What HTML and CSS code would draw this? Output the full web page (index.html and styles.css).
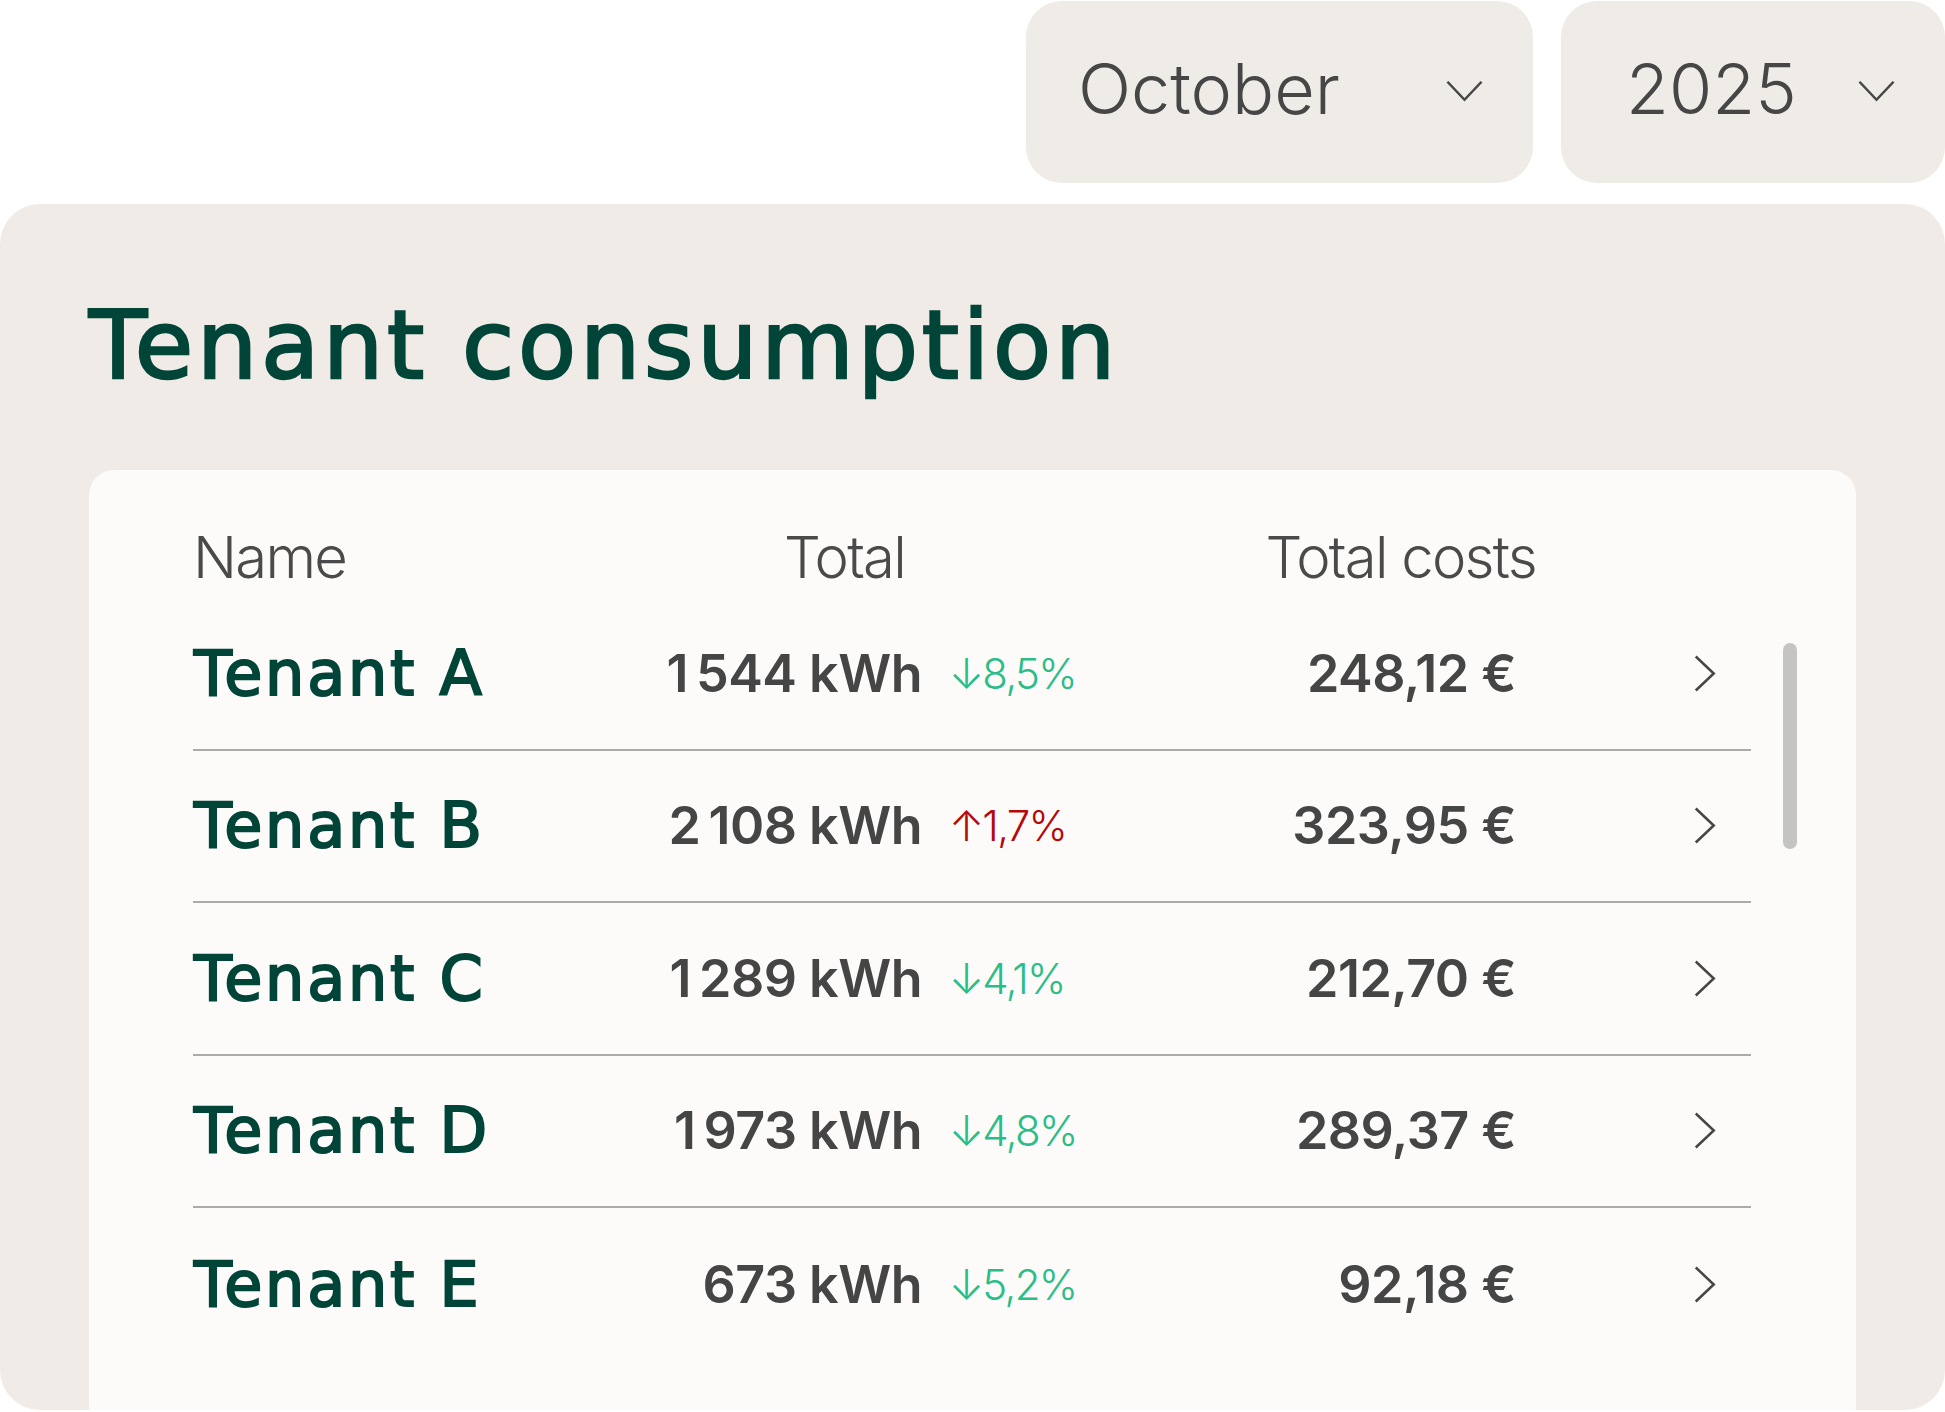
FILE: index.html
```html
<!DOCTYPE html>
<html>
<head>
    <meta charset="utf-8">
    <title>Tenant consumption</title>
    <link rel="stylesheet" href="styles.css">
</head>
<body>
    <div class="filters">
        <div class="select select-month">
            <span>October</span>
            <svg class="select-chevron" viewBox="0 0 38 22"><polyline points="1.5,1.5 19,20 36.5,1.5"/></svg>
        </div>
        <div class="select select-year">
            <span>2025</span>
            <svg class="select-chevron" viewBox="0 0 38 22"><polyline points="1.5,1.5 19,20 36.5,1.5"/></svg>
        </div>
    </div>

    <section class="card">
        <h1 class="card-title">Tenant consumption</h1>

        <div class="table">
            <div class="scrollbar"></div>

            <div class="table-head">
                <div class="head-name">Name</div>
                <div class="head-total">Total</div>
                <div></div>
                <div class="head-costs">Total costs</div>
            </div>

            <div class="table-body">
                <div class="row">
                    <div class="name">Tenant A</div>
                    <div class="total">1&#8239;544 kWh</div>
                    <div class="change down">↓8,5%</div>
                    <div class="cost">248,12 €</div>
                    <div></div>
                    <svg class="row-chevron" viewBox="0 0 22 38"><polyline points="1.5,1.5 20,19 1.5,36.5"/></svg>
                </div>
                <div class="row">
                    <div class="name">Tenant B</div>
                    <div class="total">2&#8239;108 kWh</div>
                    <div class="change up">↑1,7%</div>
                    <div class="cost">323,95 €</div>
                    <div></div>
                    <svg class="row-chevron" viewBox="0 0 22 38"><polyline points="1.5,1.5 20,19 1.5,36.5"/></svg>
                </div>
                <div class="row">
                    <div class="name">Tenant C</div>
                    <div class="total">1&#8239;289 kWh</div>
                    <div class="change down">↓4,1%</div>
                    <div class="cost">212,70 €</div>
                    <div></div>
                    <svg class="row-chevron" viewBox="0 0 22 38"><polyline points="1.5,1.5 20,19 1.5,36.5"/></svg>
                </div>
                <div class="row">
                    <div class="name">Tenant D</div>
                    <div class="total">1&#8239;973 kWh</div>
                    <div class="change down">↓4,8%</div>
                    <div class="cost">289,37 €</div>
                    <div></div>
                    <svg class="row-chevron" viewBox="0 0 22 38"><polyline points="1.5,1.5 20,19 1.5,36.5"/></svg>
                </div>
                <div class="row">
                    <div class="name">Tenant E</div>
                    <div class="total">673 kWh</div>
                    <div class="change down">↓5,2%</div>
                    <div class="cost">92,18 €</div>
                    <div></div>
                    <svg class="row-chevron" viewBox="0 0 22 38"><polyline points="1.5,1.5 20,19 1.5,36.5"/></svg>
                </div>
            </div>
        </div>
    </section>
</body>
</html>
```

FILE: styles.css
```css
body {
    margin: 0;
    width: 1945px;
    height: 1412px;
    overflow: hidden;
    background: #ffffff;
    font-family: Inter, "Liberation Sans", sans-serif;
    color: #444444;
}

/* month / year pickers */
.filters {
    display: flex;
    justify-content: flex-end;
    gap: 28px;
    height: 182px;
    padding-top: 1px;
    margin-bottom: 21px;
}

.select {
    display: flex;
    align-items: center;
    justify-content: space-between;
    box-sizing: border-box;
    height: 182px;
    padding-right: 50px;
    padding-bottom: 8px;
    background: #efebe7;
    border-radius: 36px;
    font-size: 70px;
    font-weight: 300;
    color: #464646;
}

.select-month {
    width: 507px;
    padding-left: 52px;
}

.select-year {
    width: 384px;
    padding-left: 65px;
}

.select-chevron {
    width: 37px;
    height: 22px;
    margin-top: 6px;
    fill: none;
    stroke: #464646;
    stroke-width: 2.6;
}

/* main card */
.card {
    box-sizing: border-box;
    height: 1206px;
    padding: 94px 89px 0 89px;
    background: #f0ebe7;
    border-radius: 40px;
    overflow: hidden;
}

.card-title {
    margin: 0 0 77px 0;
    font-family: "DejaVu Sans", Inter, sans-serif;
    font-size: 95px;
    line-height: 1;
    font-weight: 400;
    letter-spacing: 0.04em;
    -webkit-text-stroke: 2.4px #004538;
    color: #004538;
}

.table {
    position: relative;
    box-sizing: border-box;
    height: 960px;
    padding: 58px 105px 0 104px;
    background: #fcfbf9;
    border-radius: 25px;
}

.table-head,
.row {
    display: grid;
    grid-template-columns: 330px 399px 219px 375px 1fr 22px;
    align-items: center;
    padding-right: 35px;
}

.table-head {
    height: 58px;
    margin-bottom: 12px;
    font-size: 58px;
    line-height: 1;
    font-weight: 300;
    letter-spacing: -0.03em;
    color: #4a4a4a;
}

.head-total {
    text-align: right;
    padding-right: 17px;
}

.head-costs {
    justify-self: end;
    margin-right: -20px;
}

.row {
    box-sizing: border-box;
    height: 152.5px;
    border-bottom: 2px solid #ababab;
}

.row:last-child {
    border-bottom: none;
}

.name {
    padding-left: 1px;
    font-family: "DejaVu Sans", Inter, sans-serif;
    font-size: 62px;
    font-weight: 400;
    letter-spacing: 0.045em;
    -webkit-text-stroke: 2px #004538;
    color: #004538;
}

.total,
.cost {
    text-align: right;
    font-size: 52px;
    font-weight: 600;
    letter-spacing: -0.01em;
    color: #454545;
}

.change {
    padding-left: 27px;
    font-size: 42px;
    font-weight: 300;
    letter-spacing: -0.04em;
}

.change.down {
    color: #2bbd87;
}

.change.up {
    color: #b5090b;
}

.row-chevron {
    width: 22px;
    height: 37px;
    fill: none;
    stroke: #464646;
    stroke-width: 2.6;
}

.scrollbar {
    position: absolute;
    left: 1694px;
    top: 173px;
    width: 14px;
    height: 206px;
    background: #c4c4c2;
    border-radius: 7px;
}
```
